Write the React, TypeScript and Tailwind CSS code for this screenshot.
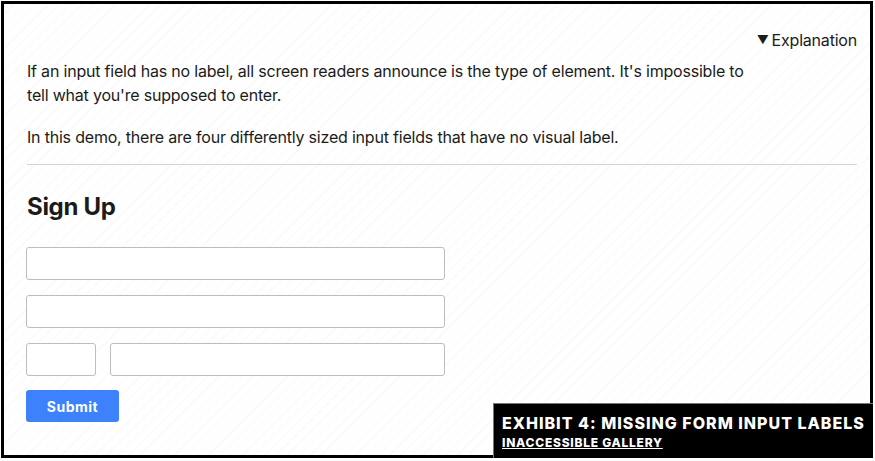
import React from "react";

export default function App() {
  return (
    <div className="w-[875px] h-[461px] bg-white pl-[1px] pt-[1px] relative" style={{ fontFamily: "Inter, 'Liberation Sans', sans-serif" }}>
      <div className="w-[872px] h-[457px] border-[3px] border-black relative overflow-hidden bg-[repeating-linear-gradient(135deg,#ffffff_0px,#ffffff_7px,#f9f9f9_7px,#f9f9f9_8px)] pl-[23px] pr-[13px] pt-[24px] text-[#1b1b1b] tracking-[-0.2px]">
        <div className="flex justify-end h-[24px] items-center text-[16px] leading-[24px]">
          <span className="text-[12px] mr-[3px]">▼</span>
          <span>Explanation</span>
        </div>
        <p className="mt-[7px] w-[730px] text-[16px] leading-[24px]">
          If an input field has no label, all screen readers announce is the type of element. It's impossible to tell what you're supposed to enter.
        </p>
        <p className="mt-[18px] text-[16px] leading-[24px]">
          In this demo, there are four differently sized input fields that have no visual label.
        </p>
        <div className="mt-[15px] h-px bg-[#d4d4d4]" />
        <h2 className="mt-[27px] text-[24px] leading-[30px] font-bold tracking-[-0.3px]">Sign Up</h2>
        <div className="mt-[25px] -ml-px flex flex-col gap-[15px] w-[419px]">
          <input className="h-[33px] w-full rounded-[3px] border border-[#bdbdbd] bg-white" />
          <input className="h-[33px] w-full rounded-[3px] border border-[#bdbdbd] bg-white" />
          <div className="flex gap-[14px]">
            <input className="h-[33px] w-[70px] rounded-[3px] border border-[#bdbdbd] bg-white" />
            <input className="h-[33px] flex-1 min-w-0 rounded-[3px] border border-[#bdbdbd] bg-white" />
          </div>
        </div>
        <button className="mt-[14px] -ml-px w-[93px] h-[32px] rounded-[3px] bg-[#3d82fc] text-white font-bold text-[14px] tracking-[0.5px]">
          Submit
        </button>
      </div>
      <div className="absolute left-[493px] top-[403px] w-[380px] h-[55px] bg-black border-t border-l border-[#777] pl-[8px] pt-[9px] text-white">
        <div className="text-[16px] leading-[20px] font-extrabold tracking-[1px] whitespace-nowrap">EXHIBIT 4: MISSING FORM INPUT LABELS</div>
        <div className="mt-[2px] text-[12px] leading-[16px] font-extrabold tracking-[0.75px] underline">INACCESSIBLE GALLERY</div>
      </div>
    </div>
  );
}
